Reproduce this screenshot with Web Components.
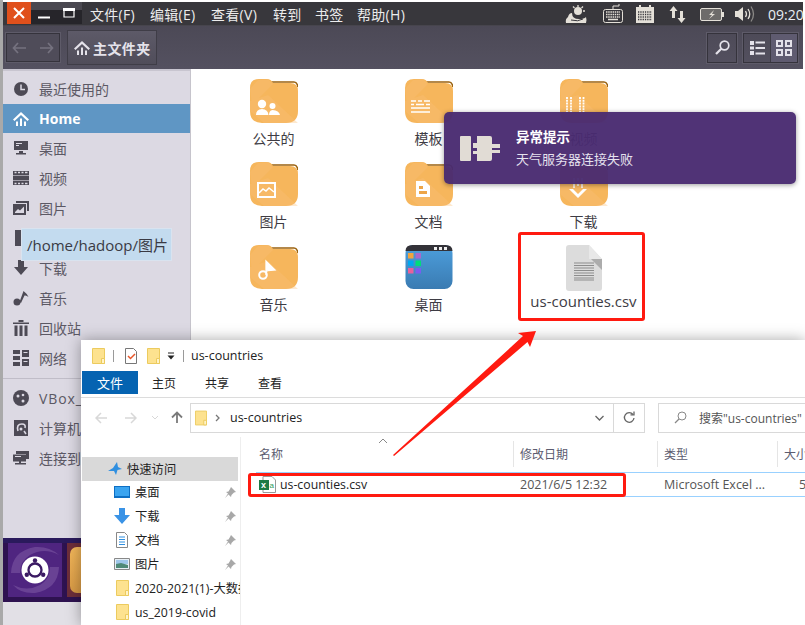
<!DOCTYPE html>
<html lang="zh"><head><meta charset="utf-8"><title>files</title>
<style>
html,body{margin:0;padding:0;background:#a9a9a9;overflow:hidden}
body{width:805px;height:625px;font-family:"Open Sans","Noto Sans CJK SC",sans-serif}
</style></head><body>
<x-desktop>
 <x-ubuntu-window>
  <x-menubar></x-menubar>
  <x-nav-toolbar></x-nav-toolbar>
  <x-nautilus-body></x-nautilus-body>
 </x-ubuntu-window>
 <x-notice title="异常提示" text="天气服务器连接失败"></x-notice>
 <x-tip>/home/hadoop/图片</x-tip>
 <x-dock></x-dock>
 <x-explorer></x-explorer>
 <x-callouts></x-callouts>
</x-desktop>
<script>
const CJK='"Open Sans","Noto Sans CJK SC",sans-serif';
function def(name,css,html){
  customElements.define(name,class extends HTMLElement{
    connectedCallback(){
      if(this.shadowRoot)return;
      const r=this.attachShadow({mode:'open'});
      const h=typeof html==='function'?html(this):html;
      r.innerHTML='<style>'+css+'</style>'+h;
    }
  });
}
const svg=(w,h,vb,body,extra='')=>`<svg width="${w}" height="${h}" viewBox="${vb}" ${extra} style="display:block;flex:none">${body}</svg>`;

/* ---------- desktop ---------- */
def('x-desktop',':host{display:block;position:relative;width:805px;height:625px;overflow:hidden;background:linear-gradient(90deg,#a9a9a9 0 3px,#fff 3px);}',`<slot></slot>`);
def('x-ubuntu-window',':host{position:absolute;left:3px;top:2px;width:800px;height:623px;display:flex;flex-direction:column;background:#fff;}',`<slot></slot>`);

/* ---------- top menu bar ---------- */
const st={
 weather:svg(22,18,'0 0 22 18','<circle cx="13" cy="6" r="4" fill="#e4e0d8"/><path d="M13 0v2M18 1.500l-1.500 1.500M20 6h-2M8 1.500l1.500 1.500" stroke="#e4e0d8" stroke-width="1.300"/><path d="M1 18q-1-4 2-6q1-4 4-4q0 6 7 6q5 0 7-2q1 3 0 6z" fill="#e4e0d8"/><path d="M6 15q7 2 12-1" stroke="#38373c" fill="none"/>'),
 kb:svg(20,20,'0 0 20 20','<path d="M10 5V2h6V0" stroke="#e4e0d8" fill="none"/><rect x=".5" y="5.500" width="19" height="13" rx="2" fill="#38373c" stroke="#e4e0d8"/><path d="M3 8h14M3 10.500h14M3 13h14" stroke="#e4e0d8" stroke-width="1.500" stroke-dasharray="1.500 .7"/><path d="M5 15.500h10" stroke="#e4e0d8" stroke-width="1.500"/>'),
 cal:svg(18,18,'0 0 18 18','<path d="M0 2h3V0h2v2h8V0h2v2h3v16H0z" fill="#e4e0d8"/><path d="M2 7h14M2 9.500h14M2 12h14M2 14.500h14" stroke="#38373c" stroke-width="1.300" stroke-dasharray="1.300 1"/>'),
 net:svg(17,17,'0 0 17 17','<path d="M4.500 0l4 5H6v7H3V5H.5zM12.500 17l-4-5H11V5h3v7h2.500z" fill="#e4e0d8"/>'),
 bat:svg(24,13,'0 0 24 13','<rect x=".5" y=".5" width="21" height="12" rx="1.500" fill="#6d6b6a" stroke="#e4e0d8"/><rect x="22" y="4" width="2" height="5" fill="#e4e0d8"/><path d="M14 2l-5 5h3l-3 4 6-5h-3z" fill="#e4e0d8"/>'),
 vol:svg(20,18,'0 0 20 18','<path d="M0 6h3l5-4v14l-5-4H0z" fill="#e4e0d8"/><path d="M10.500 6q2 3 0 6M13 4q3.500 5 0 10" stroke="#e4e0d8" fill="none" stroke-width="1.300"/><path d="M16 1.500q5 7.500 0 15" stroke="#8a8886" fill="none" stroke-width="1.300"/>')
};
def('x-menubar',`:host{display:flex;align-items:center;height:24px;background:#38373c;color:#ececec;font:14px ${CJK};flex:none;box-shadow:inset 0 -1px 0 #47454d}
.btns{display:flex;width:75px;height:22px;align-self:flex-start;margin-left:4px;background:linear-gradient(#4a4850 0 8px,#26252a 8px)}
.x{width:24px;height:22px;background:#e0501c;display:flex;align-items:center;justify-content:center}
.m{width:25px;display:flex;align-items:center;justify-content:center}
.menu{display:flex;margin-left:8px;white-space:nowrap;letter-spacing:.3px}.menu span{display:block}
.tray{margin-left:auto;display:flex;align-items:center;color:#e8eef5}.tray>*{flex:none}`,
`<div class="btns"><div class="x">${svg(12,12,'0 0 12 12','<path d="M1 1l10 10M11 1L1 11" stroke="#fff" stroke-width="2"/>')}</div>
<div class="m">${svg(12,12,'0 0 12 12','<path d="M0 10.500h12" stroke="#fff" stroke-width="2"/>')}</div>
<div class="m">${svg(12,10,'0 0 12 10','<path d="M1 1h10v8H1z" fill="#26252a" stroke="#fff" stroke-width="1.200"/><path d="M0 1.500h12" stroke="#fff" stroke-width="3"/>')}</div></div>
<div class="menu"><span style="width:60px">文件(F)</span><span style="width:61px">编辑(E)</span><span style="width:62px">查看(V)</span><span style="width:42px">转到</span><span style="width:42px">书签</span><span>帮助(H)</span></div>
<div class="tray">${st.weather}<span style="width:16px"></span>${st.kb}<span style="width:13px"></span>${st.cal}<span style="width:15px"></span>${st.net}<span style="width:14px"></span>${st.bat}<span style="width:11px"></span>${st.vol}<span style="width:13px"></span><span style="width:35px;white-space:nowrap;font-size:14px">09:20</span></div>`);

/* ---------- nav toolbar ---------- */
def('x-nav-toolbar',`:host{display:flex;align-items:center;height:43px;flex:none;background:linear-gradient(#4c4956,#545160);padding:0 3px 0 3px;box-sizing:border-box;color:#e4e2ea;font:bold 14px ${CJK}}
.grp{display:flex;align-items:center;justify-content:space-between;width:54px;height:29px;box-sizing:border-box;border:1px solid #35333c;padding:0 5px;background:#4f4c59;box-shadow:0 0 0 1px #5e5b69}
.home{display:flex;align-items:center;gap:3px;margin-left:7px;width:90px;height:35px;box-sizing:border-box;padding-left:6px;background:linear-gradient(#5d5a68,#504d5a);border:1px solid #3f3d47;letter-spacing:.4px}
.right{margin-left:auto;display:flex;align-items:center;gap:6px}
.s{width:28px;height:28px;border:1px solid #35333c;box-shadow:0 0 0 1px #5e5b69;display:flex;align-items:center;justify-content:center}
.v{display:flex;width:53px;height:28px;border:1px solid #35333c;box-shadow:0 0 0 1px #5e5b69;margin-right:2px}
.v>div{flex:1;display:flex;align-items:center;justify-content:center}.v>div+div{background:#5f5b70;border-left:1px solid #3d3b45}`,
`<div class="grp">${svg(15,12,'0 0 15 12','<path d="M14 6H2M6 1L1.500 6 6 11" stroke="#75727f" stroke-width="1.700" fill="none"/>')}${svg(15,12,'0 0 15 12','<path d="M1 6h12M9 1l4.500 5L9 11" stroke="#75727f" stroke-width="1.700" fill="none"/>')}</div>
<div class="home">${svg(16,16,'0 0 16 16','<path d="M8 1L0 8.500l1.500 1.500L8 4l6.500 6L16 8.500z" fill="#e4e2ea"/><path d="M3 10.500h2V15H3zM7 7.500h2V15H7zM11 10.500h2V15h-2z" fill="#e4e2ea"/>')}<span>主文件夹</span></div>
<div class="right"><div class="s">${svg(15,15,'0 0 15 15','<circle cx="9.500" cy="5.500" r="4.300" fill="none" stroke="#e4e2ea" stroke-width="1.700"/><path d="M6.300 8.700L1 14" stroke="#e4e2ea" stroke-width="2.200"/>')}</div>
<div class="v"><div>${svg(15,14,'0 0 15 14','<path d="M0 0h4v4H0zM0 5.500h4v3H0zM0 10h4v4H0z" fill="#e4e2ea"/><path d="M5.500 1.500H15M5.500 7H15M5.500 12.500H15" stroke="#e4e2ea" stroke-width="2"/>')}</div><div>${svg(16,16,'0 0 16 16','<path d="M1 1h5v5H1zM10 1h5v5h-5zM1 10h5v5H1zM10 10h5v5h-5z" fill="none" stroke="#e4e2ea" stroke-width="2"/>')}</div></div></div>`);

/* ---------- sidebar ---------- */
const c='#4d4a55';
const side={
 recent:svg(16,16,'0 0 16 16',`<circle cx="8" cy="8" r="7" fill="${c}"/><path d="M8 3.500V8.500H12" stroke="#dcd9e3" stroke-width="1.500" fill="none"/>`),
 home:svg(16,16,'0 0 16 16','<path d="M8 1L0 8.500l1.500 1.500L8 4l6.500 6L16 8.500z" fill="#fff"/><path d="M3 10.500h2V15H3zM7 7.500h2V15H7zM11 10.500h2V15h-2z" fill="#fff"/>'),
 desk:svg(16,16,'0 0 16 16',`<path d="M1 1h14v9H1zM6 11h4v2h3v1.500H3V13h3z" fill="${c}"/><path d="M3 3h6v1H3zM3 5h3v1H3z" fill="#dcd9e3"/>`),
 video:svg(16,14,'0 0 16 14',`<path d="M0 0h16v14H0z" fill="${c}"/><path d="M1.500 1.500h2M5 1.500h2M8.500 1.500h2M12 1.500h2.500M1.500 12.500h2M5 12.500h2M8.500 12.500h2M12 12.500h2.500" stroke="#dcd9e3" stroke-width="1.300"/><path d="M0 4.500h16M0 9.500h16" stroke="#dcd9e3" stroke-width=".6"/>`),
 pic:svg(16,14,'0 0 16 14',`<path d="M3 0h13v10h-2V2H3z" fill="${c}"/><path d="M0 3h13v11H0z" fill="${c}"/><path d="M2 11l3-3 2 1.500L11 5.500V6l0 6H2z" fill="#dcd9e3"/>`),
 doc:svg(16,16,'0 0 16 16',`<path d="M2 0h12v16H2z" fill="${c}"/>`),
 down:svg(16,16,'0 0 16 16',`<path d="M5 0h6v7h4l-7 8-7-8h4z" fill="${c}"/>`),
 music:svg(16,16,'0 0 16 16',`<circle cx="4" cy="12" r="3.500" fill="${c}"/><path d="M6.500 12L10.500 1q4 3 5 6q-2-2-4-1.500L8 13z" fill="${c}"/>`),
 trash:svg(16,16,'0 0 16 16',`<path d="M0 2.500h16V4H0zM5.500 0h5v2h-5zM1.500 5.500h3V16h-3zM6.500 5.500h3V16h-3zM11.500 5.500h3V16h-3z" fill="${c}"/>`),
 net:svg(16,16,'0 0 16 16',`<path d="M0 0h7v4H0zM9 0h7v7H9zM0 6h7v4H0zM0 12h7v4H0zM9 9h7v7H9z" fill="${c}"/><path d="M10.500 2.500h4M10.500 11.500h4" stroke="#dcd9e3"/>`),
 cd:svg(16,16,'0 0 16 16',`<circle cx="8" cy="8" r="8" fill="${c}"/><circle cx="5" cy="6" r="1.500" fill="#dcd9e3"/><circle cx="10" cy="5" r="1.300" fill="#dcd9e3"/><circle cx="10" cy="11" r="1.500" fill="#dcd9e3"/>`),
 comp:svg(14,16,'0 0 14 16',`<path d="M0 0h14v16H0z" fill="${c}"/><path d="M4 11q-2-7 4-7q4 0 3 4" stroke="#dcd9e3" stroke-width="1.600" fill="none"/><circle cx="7" cy="9" r="1.500" fill="#dcd9e3"/><path d="M10 11l2 3" stroke="#dcd9e3" stroke-width="1.500"/>`),
 conn:svg(16,14,'0 0 16 14',`<path d="M3 0h13v8h-3V3H3z" fill="${c}"/><path d="M0 3.500h13v7H8v1.500h5v1.500H2V12h4v-1.500H0z" fill="${c}"/><path d="M2 5.500h6" stroke="#dcd9e3"/>`)
};
def('x-side-item',`:host{display:flex;align-items:center;height:30px;padding-left:10px;font:14px ${CJK};color:#5b5864;white-space:nowrap;overflow:hidden;box-sizing:border-box}
:host([sel]){background:#5f96c4;color:#fff;font-weight:700;height:29px}
.i{width:16px;height:16px;display:flex;align-items:center;justify-content:center;margin-right:10px;flex:none}`,
 el=>`<div class="i">${side[el.getAttribute('i')]}</div><slot></slot>`);
def('x-sidebar',`:host{display:block;width:188px;flex:none;background:#dcd9e3;border-top:2px solid #c8c5d0;box-sizing:border-box;padding-top:3px;border-right:1px solid #c6c4cc}
hr{border:0;border-top:1px solid #c0bdc8;margin:5px 0 4px}`,
`<x-side-item i="recent">最近使用的</x-side-item><x-side-item i="home" sel>Home</x-side-item><x-side-item i="desk">桌面</x-side-item><x-side-item i="video">视频</x-side-item><x-side-item i="pic">图片</x-side-item><x-side-item i="doc">文档</x-side-item><x-side-item i="down">下载</x-side-item><x-side-item i="music">音乐</x-side-item><x-side-item i="trash">回收站</x-side-item><x-side-item i="net">网络</x-side-item><hr><x-side-item i="cd" style="letter-spacing:.9px">VBox_GAs</x-side-item><x-side-item i="comp">计算机</x-side-item><x-side-item i="conn">连接到服务器</x-side-item>`);

/* ---------- folder tiles ---------- */
const W='#fff';
const glyph={
 people:`<circle cx="12" cy="25" r="4.200" fill="${W}"/><path d="M6 36q0-5.500 6-6q6 .5 6.500 6z" fill="${W}"/><circle cx="22.500" cy="27" r="3" fill="${W}"/><path d="M19 36q0-4.500 3.500-5Q29 31.500 30 36z" fill="${W}"/>`,
 tmpl:`<path d="M6 22h5M13 22h4M19 22h6M6 25.500h3M11 25.500h8M21 25.500h4M6 29h19M6 33h19" stroke="${W}" stroke-width="1.700"/>`,
 video:`<path d="M7 18v15M11 18v15M20 18v15M23.500 18v15" stroke="${W}" stroke-width="1.800" stroke-dasharray="2 .8"/>`,
 pic:`<path d="M8 21h17v14H8z" fill="none" stroke="${W}" stroke-width="2"/><path d="M9 31l4-4 3 2 3-3 5 4" fill="none" stroke="${W}" stroke-width="1.500"/>`,
 doc:`<path d="M11 19h9l5 5v11H11z" fill="${W}"/><path d="M14 24h4v3h-4zM14 29h8v3h-8z" fill="#eda548"/>`,
 down:`<path d="M14 16v10M22 16v10" stroke="${W}" stroke-width="1.500"/><path d="M18 16v3M18 21v3" stroke="${W}" stroke-width="1.500"/><path d="M18 36l-9-9h4l5 5 5-5h4z" fill="${W}"/>`,
 music:`<circle cx="13" cy="30" r="3.800" fill="none" stroke="${W}" stroke-width="2"/><path d="M16 30V16l9 9-7 .5" fill="${W}" stroke="${W}" stroke-width="1.300"/>`
};
const folder=g=>svg(48,44,'0 0 48 44',`<path d="M21 3H44q3 0 4 5" stroke="#9a620f" stroke-width="1.600" fill="none"/><path d="M0 9Q0 0 9 0h8q4 0 6 4H40q8 0 8 8V32q0 12-12 12H12Q0 44 0 32z" fill="#f6b65c"/><path d="M0 10L8 1 18 0 23 5 2 26zM18 16L48 44H14L0 32V22z" fill="#f9c077" opacity=".35"/>${glyph[g]}`);
const apps=svg(48,44,'0 0 48 44','<defs><linearGradient id="b" x1="0" x2="0" y1="0" y2="1"><stop offset="0" stop-color="#4d9fdd"/><stop offset="1" stop-color="#3a7bb2"/></linearGradient></defs><rect x=".5" y="0" width="47" height="44" rx="8" fill="url(#b)"/><path d="M.5 6q0-6 7-6h33q7 0 7 6z" fill="#333238"/><path d="M29 2h3v3h-3zM34 2h3v3h-3zM39 2h3v3h-3z" fill="#eee"/><path d="M3 8h5.500v5.500H3z" fill="#f2a53f"/><path d="M10.500 8H16v5.500h-5.500z" fill="#a968cc"/><path d="M3 15.500h5.500V21H3z" fill="#00a8f0"/><path d="M10.500 15.500H16V21h-5.500z" fill="#00dd7a"/><path d="M3 23h5.500v5.500H3z" fill="#e8609c"/><path d="M10.500 23H16v5.500h-5.500z" fill="#7a5cf0"/>');
const csv=svg(36,46,'0 0 36 46','<path d="M3 0H23L36 14V43q0 3-3 3H3q-3 0-3-3V3q0-3 3-3z" fill="#dcdcdc"/><path d="M23 0L36 14H23z" fill="#e8e8e8"/><path d="M25 14h11v11z" fill="#acacac"/><path d="M8 18h20M8 20.500h20M8 23h20M8 25.500h20M8 28h20M8 30.500h20M8 33h20M8 35h20" stroke="#8d8d8d" stroke-width="1"/>');
def('x-tile',`:host{display:flex;flex-direction:column;align-items:center;width:155px;height:83px;box-sizing:border-box;padding-top:3px;font:14px ${CJK};color:#3e3c44;white-space:nowrap}
.l{margin-top:6px;line-height:20px}`,
 el=>{const g=el.getAttribute('g');const ic=g==='apps'?apps:g==='csv'?csv:folder(g);
  return `<div>${ic}</div><div class="l"${g==='csv'?' style="margin-top:0;font-size:15px"':''}><slot></slot></div>`;});
def('x-nautilus-body',`:host{display:flex;flex:1;min-height:0;background:#fff}
.g{display:grid;grid-template-columns:repeat(3,155px);grid-auto-rows:83px;padding:7px 0 0 5px;align-content:start}`,
`<x-sidebar></x-sidebar><div class="g"><x-tile g="people">公共的</x-tile><x-tile g="tmpl">模板</x-tile><x-tile g="video">视频</x-tile><x-tile g="pic">图片</x-tile><x-tile g="doc">文档</x-tile><x-tile g="down">下载</x-tile><x-tile g="music">音乐</x-tile><x-tile g="apps">桌面</x-tile><x-tile g="csv">us-counties.csv</x-tile></div>`);

/* ---------- notification ---------- */
def('x-notice',`:host{position:absolute;left:444px;top:112px;width:352px;height:72px;border-radius:5px;background:rgba(73,43,112,.96);box-shadow:0 1px 5px rgba(0,0,0,.4);display:flex;align-items:center;color:#fff;font:13px ${CJK};box-sizing:border-box;padding-left:16px}
.t{margin-left:16px;display:flex;flex-direction:column;gap:5px;line-height:17px}.a{font-weight:700;font-size:13.500px}.b{color:#e6e2ee;font-size:13px}`,
 el=>`${svg(40,28,'0 0 40 28','<rect x="0" y="2" width="11" height="25" rx="1" fill="#e1dcd5"/><path d="M17 2h13q2 0 2 2v6h8v4h-8v2h8v3h-8v6q0 2-2 2H17v-7h-4v-3h4v-3h-4V9h4z" fill="#e1dcd5"/>')}<div class="t"><div class="a">${el.getAttribute('title')}</div><div class="b">${el.getAttribute('text')}</div></div>`);
def('x-tip',`:host{position:absolute;left:21px;top:228px;height:33px;width:151px;box-sizing:border-box;background:#c3dbef;border:1px solid #d9e3ef;font:15px ${CJK};color:#3a3a44;display:flex;align-items:center;padding-left:5px;white-space:nowrap}`,`<slot></slot>`);

/* ---------- dock ---------- */
def('x-dock',`:host{position:absolute;left:3px;top:538px;width:78px;height:87px;background:#e2e0e6;display:block}
.d{height:64px;background:linear-gradient(#2a1a5c 0 5px,#2e1250 5px);display:flex;gap:5px;padding:5px 0 5px 5px;box-sizing:border-box;overflow:hidden}
.u{width:54px;height:54px;flex:none}
.f{width:54px;height:54px;background:#6d2e3a;flex:none;padding:4px 0 0 3px;box-sizing:border-box}
.f div{width:44px;height:46px;background:linear-gradient(#f3b75a,#d89a45);border-radius:7px}`,
`<div class="d"><div class="u">${svg(54,54,'0 0 54 54','<rect width="54" height="54" fill="#4f2580"/><path d="M3 30Q4 8 27 4q14-1 24 8Q36 4 22 12 12 18 12 30z" fill="#8a65ac" opacity=".45"/><path d="M51 24Q50 46 27 50Q13 51 5 42q14 7 27 0 10-6 10-18z" fill="#8a65ac" opacity=".45"/><circle cx="27" cy="27" r="13.500" fill="#fff"/><circle cx="27" cy="27" r="6.500" fill="none" stroke="#3b1a63" stroke-width="2.300"/><circle cx="27" cy="17.500" r="2.200" fill="#3b1a63"/><circle cx="18.800" cy="31.800" r="2.200" fill="#3b1a63"/><circle cx="35.200" cy="31.800" r="2.200" fill="#3b1a63"/>')}</div><div class="f"><div></div></div></div>`);

/* ---------- windows explorer ---------- */
const yf=(w=13,h=16)=>svg(w,h,'0 0 13 16','<path d="M.5.500h12v15H.5z" fill="#fde28f" stroke="#eccb5e"/><path d="M9.500 10.500h3v5h-3z" fill="#fff3c8" stroke="#eccb5e"/>');
def('x-win-title',`:host{display:flex;align-items:center;height:31px;padding-left:11px;font:12.500px ${CJK};color:#222;background:#fff;flex:none}
.sep{width:1px;height:12px;background:#9a9a9a;margin:0 11px 0 8px}`,
`${yf()}<div class="sep"></div>${svg(12,16,'0 0 12 16','<path d="M.5.500h8l3 3v12H.5z" fill="#fff" stroke="#777"/><path d="M3 8l2.500 2.500L10 6" stroke="#e8562a" stroke-width="1.500" fill="none"/>')}<span style="width:10px"></span>${yf()}<span style="width:7px"></span>${svg(8,8,'0 0 8 8','<path d="M1 1h6" stroke="#222"/><path d="M.5 3.500h7L4 7.500z" fill="#222"/>')}<div class="sep" style="margin:0 7px 0 8px"></div><span>us-countries</span>`);
def('x-win-tabs',`:host{display:flex;height:23px;margin-left:1px;font:12px ${CJK};color:#222;flex:none;border-bottom:0;align-items:center}
.a{width:56px;height:23px;background:#0563b1;color:#fff;display:flex;align-items:center;justify-content:center;margin-right:14px;font-size:13px}
span{display:block;width:53px}`,`<div class="a">文件</div><span>主页</span><span>共享</span><span>查看</span>`);
def('x-win-bar',`:host{display:flex;align-items:center;height:40px;margin-top:3px;border-top:1px solid #dcdcdc;padding-left:14px;font:12.500px ${CJK};color:#222;flex:none;box-sizing:border-box;overflow:hidden;width:724px}
span{flex:none;display:block}
.addr{display:flex;align-items:center;width:455px;flex:none;height:30px;border:1px solid #d9d9d9;box-sizing:border-box;margin-left:7px;padding-left:4px}
.addr .end{margin-left:auto;display:flex;align-items:center;height:100%}
.r{width:30px;height:100%;border-left:1px solid #d9d9d9;display:flex;align-items:center;justify-content:center}
.search{display:flex;align-items:center;width:160px;flex:none;height:30px;border:1px solid #d9d9d9;box-sizing:border-box;margin-left:13px;padding-left:15px;color:#555;white-space:nowrap;font-size:12px}`,
`${svg(12,12,'0 0 12 12','<path d="M12 6H1.500M6 1L1 6l5 5" stroke="#d8d8d8" stroke-width="1.500" fill="none"/>')}<span style="width:18px"></span>${svg(12,12,'0 0 12 12','<path d="M0 6h10.500M6 1l5 5-5 5" stroke="#d8d8d8" stroke-width="1.500" fill="none"/>')}<span style="width:14px"></span>${svg(8,6,'0 0 8 6','<path d="M1 1l3 3 3-3" stroke="#d8d8d8" fill="none"/>')}<span style="width:12px"></span>${svg(12,13,'0 0 12 13','<path d="M6 12V1.500M1 6.500l5-5 5 5" stroke="#7a7a7a" stroke-width="1.800" fill="none"/>')}
<div class="addr">${yf(12,16)}<span style="width:8px"></span>${svg(5,8,'0 0 5 8','<path d="M1 1l3 3-3 3" stroke="#777" stroke-width="1.300" fill="none"/>')}<span style="width:10px"></span><span>us-countries</span><div class="end">${svg(9,6,'0 0 9 6','<path d="M.5 1l4 4 4-4" stroke="#666" stroke-width="1.300" fill="none"/>')}<span style="width:9px"></span><div class="r">${svg(12,13,'0 0 12 13','<path d="M10 3.500A4.800 4.800 0 1 0 11 7" stroke="#666" stroke-width="1.300" fill="none"/><path d="M7.500 3.800h3.500V.500" stroke="#666" stroke-width="1.300" fill="none"/>')}</div></div></div>
<div class="search">${svg(13,13,'0 0 13 13','<circle cx="8" cy="5" r="4" fill="none" stroke="#888"/><path d="M5 8L1 12" stroke="#888" stroke-width="1.200"/>')}<span style="width:12px"></span><span>搜索"us-countries"</span></div>`);
const tree={
 star:svg(14,14,'0 0 14 14','<path d="M9 0l1 5 4 2-4.500 1L8 13 6 9H0l5-3z" fill="#2f8fe0"/>'),
 desk:svg(16,12,'0 0 16 12','<path d="M0 0h16v12H0z" fill="#0d6fc4"/><path d="M1 1h14v9H1z" fill="#3aa4f0"/>'),
 down:svg(16,16,'0 0 16 16','<path d="M5 0h6v7h5l-8 9-8-9h5z" fill="#3a93e6"/>'),
 doc:svg(12,16,'0 0 12 16','<path d="M.5.500h8l3 3v12H.5z" fill="#fff" stroke="#888"/><path d="M3 5h6M3 7.500h6M3 10h6M3 12.500h6" stroke="#2f8fe0"/>'),
 pic:svg(16,12,'0 0 16 12','<path d="M.5.500h15v11H.5z" fill="#e8f0f6" stroke="#888"/><path d="M2 2h12v4H2z" fill="#9fc7ea"/><path d="M2 6l5-1 7 2v3H2z" fill="#4f8a78"/>'),
 f:svg(13,16,'0 0 13 16','<path d="M.5.500h12v15H.5z" fill="#fde28f" stroke="#eccb5e"/><path d="M9.500 10.500h3v5h-3z" fill="#fff3c8" stroke="#eccb5e"/>')
};
const pin=svg(11,11,'0 0 11 11','<path d="M6 0l5 5-2 .5-2.500 2.500L6 10 3.500 7.500 0 11l3-4.500L1 5l2.500-.5L5 2z" fill="#a8a8a8"/>');
def('x-tree-item',`:host{display:flex;align-items:center;height:24px;font:12.300px ${CJK};color:#222;padding-left:32px;white-space:nowrap;overflow:hidden;box-sizing:border-box}
.i{width:16px;display:flex;justify-content:center;margin-right:5px;flex:none}
.t{flex:1;overflow:hidden}.p{width:11px;margin:0 4px 0 0;flex:none}`,
 el=>`<div class="i">${tree[el.getAttribute('i')]}</div><div class="t"><slot></slot></div>${el.hasAttribute('pin')?`<div class="p">${pin}</div>`:''}`);
def('x-tree',`:host{display:block;width:160px;flex:none;border-right:1px solid #eee;padding:20px 0 0 1px;box-sizing:border-box}
.q{display:flex;align-items:center;height:24px;width:156px;background:#d9d9d9;padding-left:26px;box-sizing:border-box;font:12.300px ${CJK};color:#222;gap:5px;margin-bottom:-1px}`,
`<div class="q">${tree.star}<span>快速访问</span></div><div style="height:0"></div>
<x-tree-item i="desk" pin>桌面</x-tree-item><x-tree-item i="down" pin>下载</x-tree-item><x-tree-item i="doc" pin>文档</x-tree-item><x-tree-item i="pic" pin>图片</x-tree-item><x-tree-item i="f">2020-2021(1)-大数据</x-tree-item><x-tree-item i="f">us_2019-covid</x-tree-item>`);
def('x-file-list',`:host{display:block;flex:1;min-width:0;font:12.500px ${CJK};color:#555;position:relative;overflow:hidden}
.h,.r{display:grid;grid-template-columns:272px 144px 120px 1fr}
.h{height:26px;margin-top:4px;align-items:center;margin-bottom:5px}
.h div{padding-left:6px;border-right:0;height:26px;display:flex;align-items:center;border-left:1px solid #e5e5e5;white-space:nowrap;color:#5c5c70;font-size:12px}
.h div:first-child{border-left:0;padding-left:18px}
.car{position:absolute;left:137px;top:1px}
.r{height:23px;align-items:center;border:1px solid #99d1ff;border-width:1px 0;margin-left:15px;grid-template-columns:257px 144px 120px 1fr;background:#fff;white-space:nowrap}
.r>div{padding-left:7px}.r>div:first-child{display:flex;align-items:center;gap:4px;color:#222;padding-left:3px;font-size:12.300px}`,
`<div class="car">${svg(10,6,'0 0 10 6','<path d="M1 5l4-4 4 4" stroke="#888" fill="none"/>')}</div>
<div class="h"><div>名称</div><div>修改日期</div><div>类型</div><div>大小</div></div>
<div class="r"><div>${svg(17,17,'0 0 17 17','<path d="M4 .5h9l3.500 3.500v12.500H4z" fill="#fff" stroke="#999"/><rect x="0" y="4" width="10" height="10" fill="#1d7a45"/><text x="2" y="12" font-size="9" font-weight="700" fill="#fff" font-family="Liberation Sans">x</text><text x="10.500" y="11.500" font-size="8" fill="#2d9a5c" font-family="Liberation Sans">a</text>')}<span>us-counties.csv</span></div><div>2021/6/5 12:32</div><div>Microsoft Excel ...</div><div style="padding-left:22px">5</div></div>`);
def('x-explorer',`:host{position:absolute;left:81px;top:340px;width:724px;height:285px;background:#fff;box-shadow:0 0 14px rgba(0,0,0,.35);display:flex;flex-direction:column}
.b{display:flex;flex:1;min-height:0}`,
`<x-win-title></x-win-title><x-win-tabs></x-win-tabs><x-win-bar></x-win-bar><div class="b"><x-tree></x-tree><x-file-list></x-file-list></div>`);

/* ---------- red annotations ---------- */
def('x-callouts',`:host{position:absolute;inset:0;display:block;pointer-events:none}
.box{position:absolute;border:3px solid #ff1a10;border-radius:3px;box-sizing:border-box}svg{position:absolute;left:0;top:0}`,
`<div class="box" style="left:518px;top:232px;width:127px;height:89px"></div>
<div class="box" style="left:248px;top:473px;width:378px;height:24px"></div>
<svg width="805" height="625" viewBox="0 0 805 625"><path d="M393 455L523 336 518 333 536 331 530 347 527.500 342 394 456z" fill="#ff1a10"/></svg>`);
</script>
</body></html>
